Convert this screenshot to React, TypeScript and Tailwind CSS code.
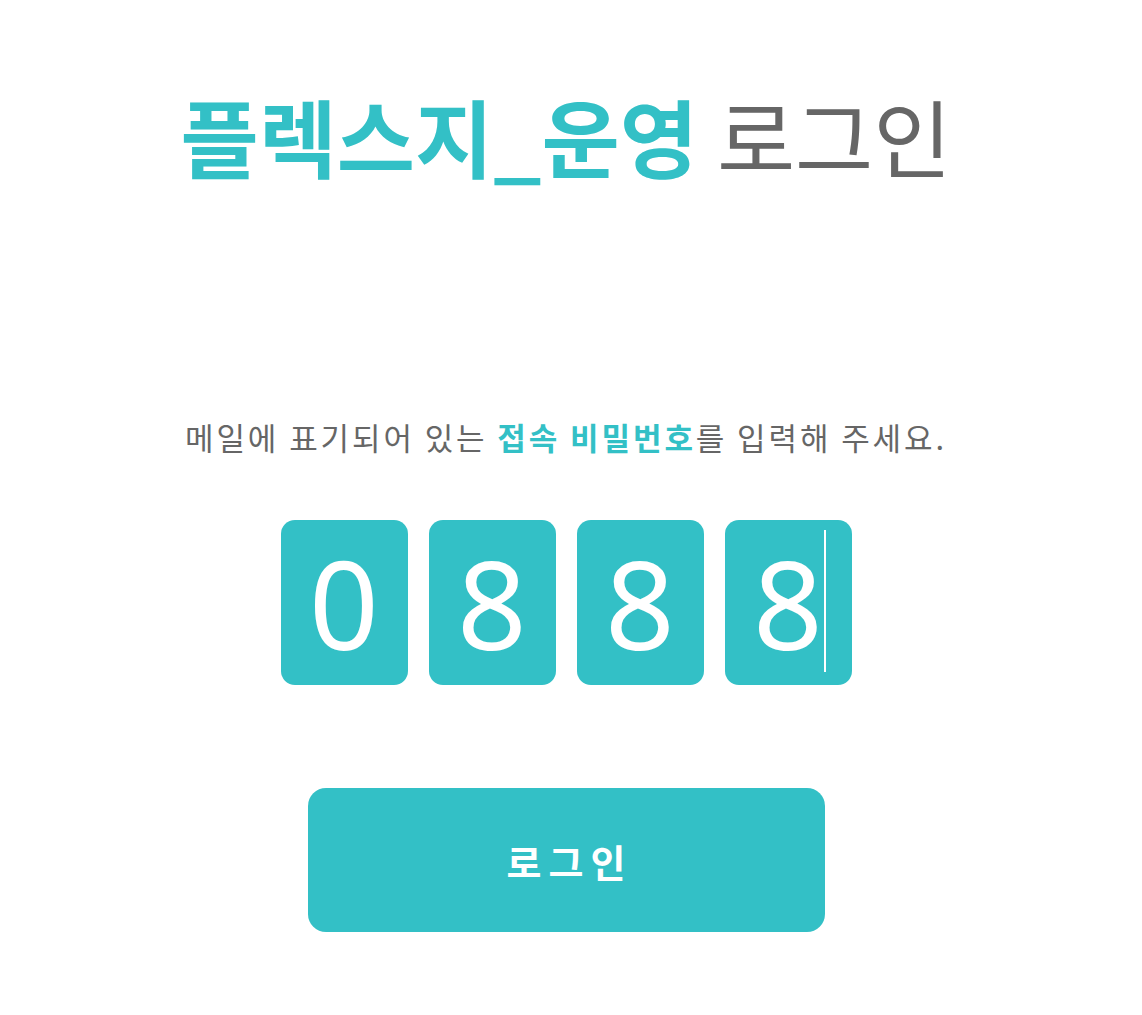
export default function App() {
  const digits = ['0', '8', '8', '8']
  return (
    <div
      className="min-h-screen bg-white flex flex-col items-center pr-[10px]"
      style={{ fontFamily: '"Noto Sans CJK KR", "Noto Sans", sans-serif' }}
    >
      <h1 className="mt-[92px] text-[85px] leading-none whitespace-nowrap">
        <span className="font-bold text-[#33c0c6]">플렉스지_운영</span>
        <span className="font-normal text-[#666666]"> 로그인</span>
      </h1>

      <p className="mt-[244px] text-[31px] leading-none tracking-[2.9px] text-[#666666] whitespace-nowrap">
        메일에 표기되어 있는 <span className="font-bold text-[#33c0c6]">접속 비밀번호</span>를 입력해 주세요.
      </p>

      <div className="mt-[68px] flex gap-[21px]">
        {digits.map((d, i) => (
          <div
            key={i}
            className="relative w-[127px] h-[165px] rounded-[14px] bg-[#33c0c6] flex items-center justify-center text-white text-[122px] leading-none"
            style={{ fontFamily: '"Noto Sans", sans-serif' }}
          >
            {d}
            {i === 3 && (
              <span className="absolute right-[26px] top-[10px] h-[142px] w-[2px] bg-white" />
            )}
          </div>
        ))}
      </div>

      <button className="mt-[103px] w-[517px] h-[144px] rounded-[18px] bg-[#33c0c6] text-white text-[38px] font-bold tracking-[7px] pl-[7px]">
        로그인
      </button>
    </div>
  )
}
